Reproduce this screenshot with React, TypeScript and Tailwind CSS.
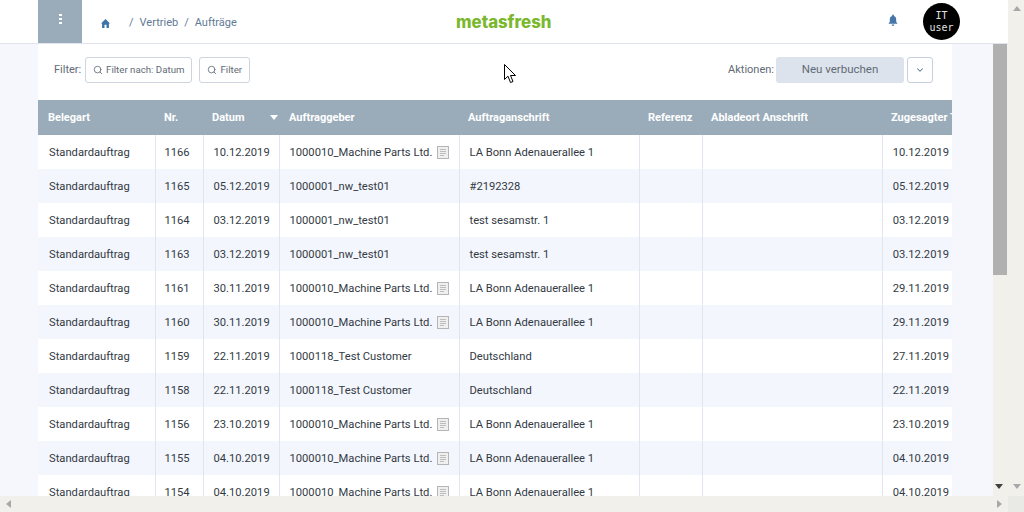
import * as React from "react";
import { Search, ChevronDown } from "lucide-react";

interface OrderRow {
  nr: string;
  datum: string;
  kunde: string;
  doc: boolean;
  anschrift: string;
  zugesagt: string;
}

const rows: OrderRow[] = [
  { nr: "1166", datum: "10.12.2019", kunde: "1000010_Machine Parts Ltd.", doc: true, anschrift: "LA Bonn Adenauerallee 1", zugesagt: "10.12.2019" },
  { nr: "1165", datum: "05.12.2019", kunde: "1000001_nw_test01", doc: false, anschrift: "#2192328", zugesagt: "05.12.2019" },
  { nr: "1164", datum: "03.12.2019", kunde: "1000001_nw_test01", doc: false, anschrift: "test sesamstr. 1", zugesagt: "03.12.2019" },
  { nr: "1163", datum: "03.12.2019", kunde: "1000001_nw_test01", doc: false, anschrift: "test sesamstr. 1", zugesagt: "03.12.2019" },
  { nr: "1161", datum: "30.11.2019", kunde: "1000010_Machine Parts Ltd.", doc: true, anschrift: "LA Bonn Adenauerallee 1", zugesagt: "29.11.2019" },
  { nr: "1160", datum: "30.11.2019", kunde: "1000010_Machine Parts Ltd.", doc: true, anschrift: "LA Bonn Adenauerallee 1", zugesagt: "29.11.2019" },
  { nr: "1159", datum: "22.11.2019", kunde: "1000118_Test Customer", doc: false, anschrift: "Deutschland", zugesagt: "27.11.2019" },
  { nr: "1158", datum: "22.11.2019", kunde: "1000118_Test Customer", doc: false, anschrift: "Deutschland", zugesagt: "22.11.2019" },
  { nr: "1156", datum: "23.10.2019", kunde: "1000010_Machine Parts Ltd.", doc: true, anschrift: "LA Bonn Adenauerallee 1", zugesagt: "23.10.2019" },
  { nr: "1155", datum: "04.10.2019", kunde: "1000010_Machine Parts Ltd.", doc: true, anschrift: "LA Bonn Adenauerallee 1", zugesagt: "04.10.2019" },
  { nr: "1154", datum: "04.10.2019", kunde: "1000010_Machine Parts Ltd.", doc: true, anschrift: "LA Bonn Adenauerallee 1", zugesagt: "04.10.2019" },
];

const DocIcon = () => (
  <svg width="12" height="13" viewBox="0 0 12 13" className="ml-[5px] -mt-[1px] shrink-0">
    <rect x="0.5" y="0.5" width="11" height="12" fill="#efefef" stroke="#b5b5b5" />
    <path d="M3 3.500h6M3 5.500h6M3 7.500h6M3 9.500h4" stroke="#bdbdbd" strokeWidth="1" />
  </svg>
);

const HomeIcon = () => (
  <svg width="9" height="9" viewBox="0 0 10 10" fill="#3f74a8">
    <path d="M5 0 0 5h1.200v5h2.700V6.500h2.200V10h2.700V5H10z" />
  </svg>
);

const BellIcon = () => (
  <svg width="10" height="13" viewBox="0 0 11 13" fill="#4677a8" className="-mt-[2px]">
    <path d="M5.500 0c.6 0 1 .4 1 1v.5C8.200 2 9 3.300 9 5v3l1.500 2H.5L2 8V5c0-1.700.8-3 2.500-3.500V1c0-.6.4-1 1-1z" />
    <path d="M4 11h3a1.500 1.500 0 0 1-3 0z" />
  </svg>
);

const MouseCursor = () => (
  <svg width="13" height="20" viewBox="0 0 13 20" className="absolute left-[504px] top-[64px]">
    <path d="M.5.5v15l3.500-3.300 2.500 6.300 2.500-1-2.500-6h5z" fill="#fff" stroke="#000" strokeWidth="1" />
  </svg>
);

const App: React.FC = () => {
  return (
    <div className="relative flex flex-col w-[1024px] h-[512px] overflow-hidden bg-[#f1f0ea] font-['Roboto',sans-serif] text-[11.2px]">
      <div className="flex h-[496px] overflow-hidden">
        <div className="flex flex-col w-[1008px] min-h-0">
          <header className="flex items-center shrink-0 h-[44px] bg-white border-b border-[#e0e4ec] pl-[38px]">
            <div className="flex justify-center w-[44px] h-full bg-[#9aacba] pt-[14px]">
              <div className="flex flex-col gap-[2px]">
                <span className="block w-[3px] h-[2px] bg-white"></span>
                <span className="block w-[3px] h-[2px] bg-white"></span>
                <span className="block w-[3px] h-[2px] bg-white"></span>
              </div>
            </div>
            <div className="flex items-center w-[374px] pl-[19px] pt-[3px] text-[11px] text-[#5f7a96]">
              <HomeIcon />
              <span className="ml-[19px]">/</span>
              <span className="ml-[6px]">Vertrieb</span>
              <span className="ml-[6px]">/</span>
              <span className="ml-[6px]">Aufträge</span>
            </div>
            <div className="w-[96px] pt-[1px] font-['Inter',sans-serif] font-extrabold text-[16.8px] leading-none text-[#7ab82e] whitespace-nowrap">
              metasfresh
            </div>
            <div className="flex items-center ml-[336px]">
              <BellIcon />
              <div className="flex flex-col items-center justify-center w-[37px] h-[37px] ml-[25px] rounded-full bg-black text-[#e0e0e0] font-['DejaVu_Sans_Mono',monospace] text-[10px] leading-[12px]">
                <span>IT</span>
                <span>user</span>
              </div>
            </div>
          </header>
          <div className="flex flex-1 min-h-0">
            <div className="w-[993px] bg-[#f5f7fc] pl-[38px] pr-[41px]">
              <div className="h-full bg-white overflow-hidden">
                <div className="flex items-start h-[56px] pt-[13px] pl-[16px] pr-[19px] text-[#5f6b76] text-[11px]">
                  <span className="mr-[4px] leading-[26px]">Filter:</span>
                  <button className="flex items-center justify-center gap-[3px] w-[107px] h-[26px] border border-[#cdd5de] rounded-[3px] text-[9.7px] text-[#5f6b76]">
                    <Search size={10} />
                    Filter nach: Datum
                  </button>
                  <button className="flex items-center justify-center gap-[3px] w-[51px] h-[26px] ml-[7px] border border-[#cdd5de] rounded-[3px] text-[9.7px] text-[#5f6b76]">
                    <Search size={10} />
                    Filter
                  </button>
                  <span className="ml-auto mr-[2px] leading-[26px]">Aktionen:</span>
                  <button className="w-[128px] h-[26px] bg-[#dde3ec] rounded-[3px] text-[11.5px] text-[#5f6b76]">
                    Neu verbuchen
                  </button>
                  <button className="flex items-center justify-center w-[26px] h-[26px] ml-[3px] border border-[#c5d0dc] rounded-[3px] text-[#5b7a9b]">
                    <ChevronDown size={10} strokeWidth={2.5} />
                  </button>
                </div>
                <table className="table-fixed w-[914px] border-collapse text-[#333a44]">
                  <colgroup>
                    <col className="w-[117px]" />
                    <col className="w-[48px]" />
                    <col className="w-[76px]" />
                    <col className="w-[180px]" />
                    <col className="w-[180px]" />
                    <col className="w-[63px]" />
                    <col className="w-[180px]" />
                    <col className="w-[70px]" />
                  </colgroup>
                  <thead>
                    <tr className="h-[35px] bg-[#9aacba] text-white text-[11px] text-left font-bold">
                      <th className="pl-[10px] pt-[2px]">Belegart</th>
                      <th className="pl-[9px] pt-[2px]">Nr.</th>
                      <th className="pl-[9px] pt-[2px] relative">
                        Datum
                        <span className="absolute right-[1px] top-[15px] border-x-[4px] border-t-[5px] border-x-transparent border-t-white"></span>
                      </th>
                      <th className="pl-[10px] pt-[2px]">Auftraggeber</th>
                      <th className="pl-[9px] pt-[2px]">Auftraganschrift</th>
                      <th className="pl-[9px] pt-[2px]">Referenz</th>
                      <th className="pl-[9px] pt-[2px]">Abladeort Anschrift</th>
                      <th className="pl-[9px] pt-[2px] whitespace-nowrap overflow-hidden">Zugesagter Termin</th>
                    </tr>
                  </thead>
                  <tbody>
                    {rows.map((row, i) => (
                      <tr key={row.nr} className={"h-[34px] " + (i % 2 === 1 ? "bg-[#f3f6fc]" : "bg-white")}>
                        <td className="pl-[11px] pt-[2px] border-r border-[#dfe6ee]">Standardauftrag</td>
                        <td className="pl-[9px] pt-[2px] border-r border-[#dfe6ee]">{row.nr}</td>
                        <td className="pl-[10px] pt-[2px] border-r border-[#dfe6ee]">{row.datum}</td>
                        <td className="pl-[10px] pt-[2px] border-r border-[#dfe6ee]">
                          <div className="flex items-center whitespace-nowrap">
                            {row.kunde}
                            {row.doc && <DocIcon />}
                          </div>
                        </td>
                        <td className="pl-[10px] pt-[2px] border-r border-[#dfe6ee]">{row.anschrift}</td>
                        <td className="border-r border-[#dfe6ee]"></td>
                        <td className="border-r border-[#dfe6ee]"></td>
                        <td className="pr-[3px] pt-[2px] text-right">{row.zugesagt}</td>
                      </tr>
                    ))}
                  </tbody>
                </table>
              </div>
            </div>
            <div className="w-[14px] h-[231px] bg-[#b0b0b0]"></div>
          </div>
        </div>
        <div className="relative flex flex-col items-center justify-between flex-1 pt-[6px] pb-[7px] pl-[1px]">
          <span className="border-x-[4px] border-b-[5px] border-x-transparent border-b-[#a8a8a8]"></span>
          <span className="border-x-[4px] border-t-[5px] border-x-transparent border-t-[#a8a8a8]"></span>
          <span className="absolute left-[-13px] bottom-[7px] border-x-[4px] border-t-[5px] border-x-transparent border-t-[#404040]"></span>
        </div>
      </div>
      <div className="flex items-center justify-between h-[16px]">
        <span className="ml-[6px] border-y-[4px] border-r-[5px] border-y-transparent border-r-[#a8a8a8]"></span>
        <div className="flex items-center h-full">
          <span className="mr-[6px] border-y-[4px] border-l-[5px] border-y-transparent border-l-[#a8a8a8]"></span>
          <span className="w-[16px] h-full bg-[#e9e9e6]"></span>
        </div>
      </div>
      <MouseCursor />
    </div>
  );
};

export default App;
